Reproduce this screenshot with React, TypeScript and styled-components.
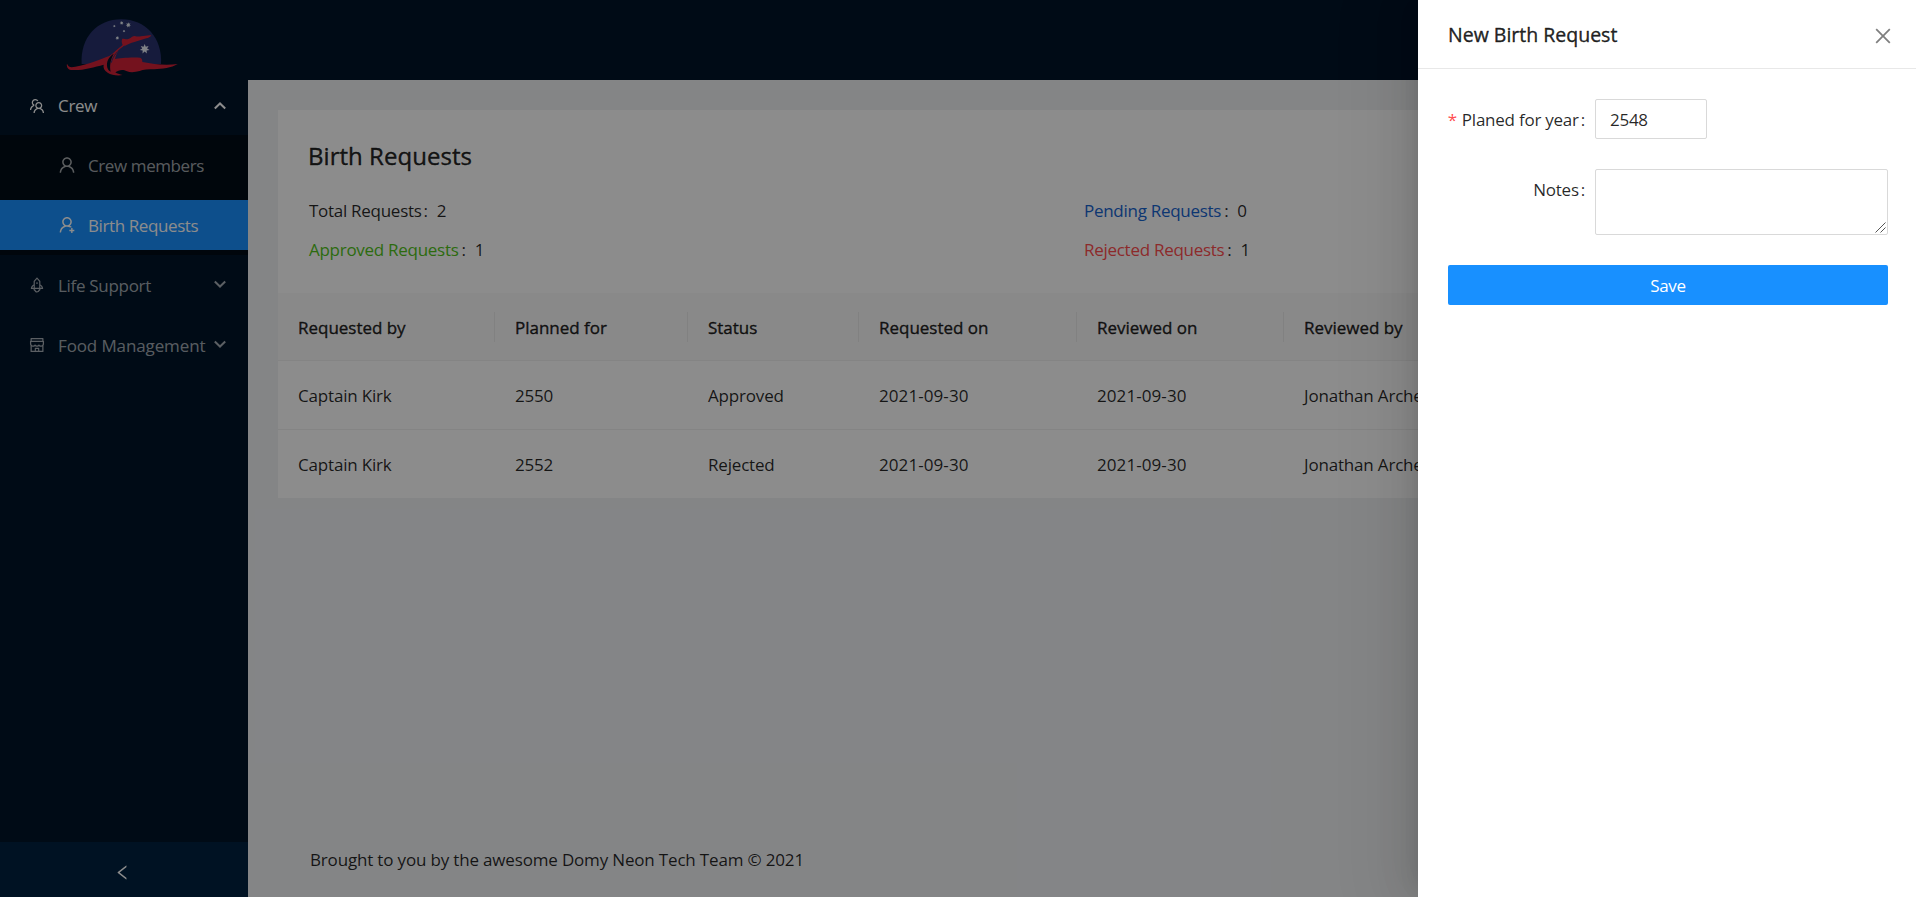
import React from "react";
import styled, { createGlobalStyle, css } from "styled-components";
import {
  AiOutlineClose,
  AiOutlineLeft,
  AiOutlineRocket,
  AiOutlineShop,
  AiOutlineTeam,
  AiOutlineUser,
  AiOutlineUserAdd,
} from "react-icons/ai";

const GlobalStyle = createGlobalStyle`
  *, *::before, *::after { box-sizing: border-box; }
  body {
    margin: 0;
    overflow: hidden;
    font-family: "Open Sans", "Noto Sans", sans-serif;
    font-size: 17px;
    line-height: 28px;
    letter-spacing: -0.28px;
    color: rgba(0, 0, 0, 0.85);
    background: #f0f2f5;
  }
`;

const medium = css`
  font-weight: 400;
  -webkit-text-stroke: 0.4px currentColor;
`;

const Layout = styled.div`
  display: flex;
  height: 897px;
`;

const Sider = styled.aside`
  display: flex;
  flex-direction: column;
  width: 248px;
  background: #001529;
`;

const LogoArea = styled.div`
  height: 76px;
  padding: 18px 0 0 65px;
  svg { display: block; }
`;

const Menu = styled.nav`
  flex: 1;
  padding-top: 5px;
`;

const itemBase = css`
  display: flex;
  align-items: center;
  height: 50px;
  padding-right: 21px;
  color: rgba(255, 255, 255, 0.65);
  white-space: nowrap;
  > span { padding-top: 1px; }
`;

const MenuTitle = styled.div<{ $open?: boolean; $track?: number }>`
  ${itemBase}
  padding-left: 28px;
  margin-bottom: ${(p) => (p.$open ? 4 : 10)}px;
  letter-spacing: ${(p) => p.$track ?? -0.3}px;
  ${(p) => p.$open && "color: #fff;"}
  > span { flex: 1; margin-left: 12px; ${(p) => p.$open && "padding-top: 0;"} }
  > svg:first-child { width: 18px; height: 18px; }
`;

const SubMenu = styled.div`
  padding: 5px 0;
  margin-bottom: 5px;
  background: #000c17;
`;

const SubItem = styled.div<{ $selected?: boolean }>`
  ${itemBase}
  padding-left: 57px;
  letter-spacing: -0.4px;
  & + & { margin-top: 10px; }
  ${(p) => p.$selected && "background: #1890ff; color: #fff;"}
  > span { margin-left: 11px; }
  > svg { width: 20px; height: 20px; }
`;

const Trigger = styled.div`
  display: flex;
  align-items: center;
  justify-content: center;
  height: 55px;
  padding: 6px 3px 0 0;
  background: #002140;
  color: #fff;
  font-size: 19px;
`;

const Main = styled.div`
  flex: 1;
  display: flex;
  flex-direction: column;
`;

const TopBar = styled.header`
  height: 80px;
  background: #001529;
`;

const Content = styled.main`
  flex: 1;
  padding: 30px;
`;

const Card = styled.section`
  background: #fff;
`;

const CardHead = styled.div`
  height: 183px;
  padding: 26px 30px 0;
`;

const Title = styled.h1`
  margin: 0 0 21px;
  font-size: 24px;
  line-height: 40px;
  letter-spacing: 0.04px;
  ${medium}
`;

const Stats = styled.div`
  display: grid;
  grid-template-columns: 775px 1fr;
  row-gap: 11px;
  padding-left: 1px;
`;

const Stat = styled.div<{ $color?: string }>`
  display: flex;
  > span:first-child { color: ${(p) => p.$color ?? "inherit"}; }
  > i { font-style: normal; margin: 0 9px 0 ${(p) => (p.$color ? 3 : 2)}px; }
`;

const Table = styled.div`
  display: grid;
  grid-template-columns: 217px 193px 171px 218px 207px 1fr;
`;

const HeadCell = styled.div`
  display: flex;
  align-items: center;
  height: 68px;
  background: #fafafa;
  border-bottom: 1px solid #f0f0f0;
  letter-spacing: -0.02px;
  ${medium}
  > span {
    flex: 1;
    padding: 2px 0 0 20px;
    border-right: 1px solid #ececec;
  }
  &:last-child > span { border-right: 0; }
`;

const Cell = styled.div<{ $last?: boolean; $date?: boolean }>`
  height: ${(p) => (p.$last ? 68 : 69)}px;
  padding: 21px 20px 0;
  border-bottom: ${(p) => (p.$last ? 0 : 1)}px solid #f0f0f0;
  letter-spacing: ${(p) => (p.$date ? 0.08 : -0.18)}px;
`;

const Footer = styled.footer`
  height: 67px;
  padding: 16px 62px;
  letter-spacing: -0.17px;
`;

const Mask = styled.div`
  position: absolute;
  inset: 0;
  background: rgba(0, 0, 0, 0.45);
`;

const Drawer = styled.aside`
  position: absolute;
  top: 0;
  right: 0;
  bottom: 0;
  width: 498px;
  background: #fff;
  box-shadow: -8px 0 20px -10px rgba(0, 0, 0, 0.12), -11px 0 35px rgba(0, 0, 0, 0.08),
    -15px 0 60px 20px rgba(0, 0, 0, 0.05);
`;

const DrawerHead = styled.div`
  display: flex;
  align-items: center;
  justify-content: space-between;
  height: 69px;
  padding: 2px 22px 0 30px;
  border-bottom: 1px solid #e8e8e8;
  font-size: 19.5px;
  letter-spacing: 0;
  > span { ${medium} }
  > svg { color: rgba(0, 0, 0, 0.5); margin-top: 1px; }
`;

const Form = styled.div`
  display: flex;
  flex-direction: column;
  gap: 30px;
  padding: 30px 28px 0 30px;
`;

const Field = styled.label`
  display: flex;
  position: relative;
`;

const Label = styled.span`
  display: flex;
  justify-content: flex-end;
  width: 137px;
  height: 40px;
  margin-right: 10px;
  padding-top: 1px;
  line-height: 40px;
  letter-spacing: -0.24px;
  white-space: nowrap;
  &::after {
    content: ":";
    margin-left: 2px;
  }
`;

const Star = styled.span`
  margin-right: 5px;
  color: #ff4d4f;
`;

const inputBase = css`
  border: 1px solid #d9d9d9;
  border-radius: 2px;
  font: inherit;
  letter-spacing: inherit;
  color: inherit;
  outline: none;
`;

const YearInput = styled.input`
  ${inputBase}
  width: 112px;
  height: 40px;
  padding: 0 14px;
`;

const Notes = styled.textarea`
  ${inputBase}
  display: block;
  width: 293px;
  height: 66px;
  resize: none;
`;

const ResizeGrip = styled.svg`
  position: absolute;
  right: 2px;
  bottom: 2px;
`;

const Save = styled.button`
  height: 40px;
  padding: 2px 0 0;
  border: 0;
  border-radius: 2px;
  background: #1890ff;
  color: #fff;
  font: inherit;
  letter-spacing: inherit;
`;

const Chevron = ({ up }: { up?: boolean }) => (
  <svg width="14" height="12" viewBox="0 0 14 12" fill="none" stroke="currentColor" strokeWidth="2">
    <path d={up ? "M1.8 8.5 7 3.5l5.2 5" : "M1.8 2.5 7 7.5l5.2-5"} />
  </svg>
);

const Star7 = ({ x, y, r }: { x: number; y: number; r: number }) => {
  const pts = Array.from({ length: 14 }, (_, i) => {
    const a = (Math.PI * i) / 7 - Math.PI / 2;
    const d = i % 2 ? r * 0.5 : r;
    return `${x + d * Math.cos(a)},${y + d * Math.sin(a)}`;
  }).join(" ");
  return <polygon points={pts} fill="#e8edf5" />;
};

const Logo = () => (
  <svg width="113.33" height="58.33" viewBox="45 40 340 175">
    <path d="M95 178C90 98 142 44 214 44s124 56 119 134Z" fill="#28326e" />
    <path
      d="M51 177c4 11 12 12 25 9 40-6 75-22 102-32 14-10 26-22 40-33-3-7-4-13-1-19 8 0 12 3 18 1 9-3 10-8 18-9 8 1 12 3 20 1 10-1 20-4 31-3-3 5-9 8-15 9l-36 11c-22 6-36 15-46 25-6 8-10 15-12 26 14-3 48-6 76-4 5 2 6 8 6 13 35 6 66 11 106 6-18 12-48 14-70 16-18 0-33 0-44 5-14 4-28 5-38 1-14-8-26-3-35 3 6 4 12 6 22 8-16 3-34 0-45-7-10-6-14-14-12-24-30 8-62 18-98 16-10-2-14-11-12-19Z"
      fill="#d42238"
    />
    <path d="M191 147c-15 10-23 24-19 42 2 6 5 9 10 12-4-18 0-37 9-54Z" fill="#001529" />
    <path d="M224 124c-19 12-36 30-40 50" stroke="#28326e" strokeWidth="3" fill="none" />
    <Star7 x={284} y={133} r={15} />
    <Star7 x={215} y={55} r={6} />
    <Star7 x={235} y={61} r={8} />
    <Star7 x={193} y={64} r={4} />
    <Star7 x={222} y={79} r={4} />
    <Star7 x={202} y={100} r={6} />
  </svg>
);

const columns = ["Requested by", "Planned for", "Status", "Requested on", "Reviewed on", "Reviewed by"];
const rows = [
  ["Captain Kirk", "2550", "Approved", "2021-09-30", "2021-09-30", "Jonathan Archer"],
  ["Captain Kirk", "2552", "Rejected", "2021-09-30", "2021-09-30", "Jonathan Archer"],
];
const stats = [
  { label: "Total Requests", value: 2 },
  { label: "Pending Requests", value: 0, color: "#1764d0" },
  { label: "Approved Requests", value: 1, color: "#52c41a" },
  { label: "Rejected Requests", value: 1, color: "#ff4d4f" },
];

export default function App() {
  return (
    <>
      <GlobalStyle />
      <Layout>
        <Sider>
          <LogoArea><Logo /></LogoArea>
          <Menu>
            <MenuTitle $open><AiOutlineTeam /><span>Crew</span><Chevron up /></MenuTitle>
            <SubMenu>
              <SubItem><AiOutlineUser /><span>Crew members</span></SubItem>
              <SubItem $selected><AiOutlineUserAdd /><span>Birth Requests</span></SubItem>
            </SubMenu>
            <MenuTitle><AiOutlineRocket /><span>Life Support</span><Chevron /></MenuTitle>
            <MenuTitle $track={-0.12}><AiOutlineShop /><span>Food Management</span><Chevron /></MenuTitle>
          </Menu>
          <Trigger><AiOutlineLeft /></Trigger>
        </Sider>
        <Main>
          <TopBar />
          <Content>
            <Card>
              <CardHead>
                <Title>Birth Requests</Title>
                <Stats>
                  {stats.map((s) => (
                    <Stat key={s.label} $color={s.color}>
                      <span>{s.label}</span><i>:</i><span>{s.value}</span>
                    </Stat>
                  ))}
                </Stats>
              </CardHead>
              <Table>
                {columns.map((c) => <HeadCell key={c}><span>{c}</span></HeadCell>)}
                {rows.map((row, r) =>
                  row.map((v, i) => (
                    <Cell key={`${r}-${i}`} $last={r === rows.length - 1} $date={i === 3 || i === 4}>{v}</Cell>
                  ))
                )}
              </Table>
            </Card>
          </Content>
          <Footer>Brought to you by the awesome Domy Neon Tech Team © 2021</Footer>
        </Main>
      </Layout>
      <Mask />
      <Drawer>
        <DrawerHead><span>New Birth Request</span><AiOutlineClose size={22} /></DrawerHead>
        <Form>
          <Field>
            <Label><Star>*</Star>Planed for year</Label>
            <YearInput defaultValue="2548" />
          </Field>
          <Field>
            <Label>Notes</Label>
            <Notes />
            <ResizeGrip width="11" height="11" viewBox="0 0 11 11" stroke="#555" fill="none">
              <path d="M.5 10.5l10-10M5.5 10.5l5-5" />
            </ResizeGrip>
          </Field>
          <Save>Save</Save>
        </Form>
      </Drawer>
    </>
  );
}
